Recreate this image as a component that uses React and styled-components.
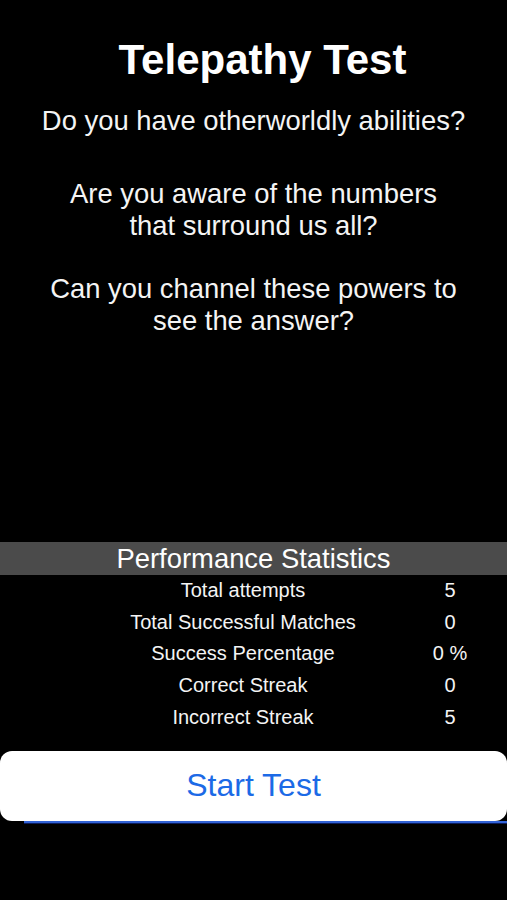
import React from "react";
import styled, { createGlobalStyle } from "styled-components";

const Global = createGlobalStyle`
  html, body { margin: 0; padding: 0; background: #000; }
  body { font-family: "Liberation Sans", Arial, Helvetica, sans-serif; color: #fff; }
`;

const Screen = styled.div`
  width: 507px;
  min-height: 900px;
  background: #000;
  display: flex;
  flex-direction: column;
  padding-top: 36px;
  box-sizing: border-box;
`;

const Title = styled.h1`
  margin: 0;
  padding-left: 18px;
  font-size: 42px;
  line-height: 48px;
  font-weight: 700;
  text-align: center;
  color: #fff;
`;

const Para = styled.p`
  margin: ${(p) => p.$top}px 0 0;
  font-size: 27.4px;
  line-height: 32px;
  text-align: center;
  color: #f4f4f4;
`;

const StatsHeader = styled.div`
  margin-top: 205px;
  height: 33px;
  background: #4b4b4b;
  color: #fff;
  font-size: 27.4px;
  line-height: 33px;
  text-align: center;
`;

const StatsList = styled.div`
  display: flex;
  flex-direction: column;
`;

const StatRow = styled.div`
  display: grid;
  grid-template-columns: 1fr 58px;
  padding: 0 28px 0 65px;
  height: 31.6px;
  align-items: center;
  font-size: 20px;
  color: #f4f4f4;
`;

const StatLabel = styled.span`
  text-align: center;
`;

const StatValue = styled.span`
  text-align: center;
`;

const StartButton = styled.button`
  margin-top: 18px;
  height: 70px;
  width: 507px;
  border: none;
  border-radius: 12px;
  background: #fff;
  color: #1c6ae6;
  font-family: "Liberation Sans", Arial, Helvetica, sans-serif;
  font-size: 32px;
  padding: 0;
  cursor: pointer;
`;

const Underline = styled.div`
  margin-left: 24px;
  height: 2px;
  background: #3263d6;
  border-bottom: 1px solid #0b1c5c;
`;

const stats = [
  ["Total attempts", "5"],
  ["Total Successful Matches", "0"],
  ["Success Percentage", "0 %"],
  ["Correct Streak", "0"],
  ["Incorrect Streak", "5"],
];

export default function App() {
  return (
    <>
      <Global />
      <Screen>
        <Title>Telepathy Test</Title>
        <Para $top={21}>Do you have otherworldly abilities?</Para>
        <Para $top={41}>
          Are you aware of the numbers
          <br />
          that surround us all?
        </Para>
        <Para $top={31}>
          Can you channel these powers to
          <br />
          see the answer?
        </Para>
        <StatsHeader>Performance Statistics</StatsHeader>
        <StatsList>
          {stats.map(([label, value]) => (
            <StatRow key={label}>
              <StatLabel>{label}</StatLabel>
              <StatValue>{value}</StatValue>
            </StatRow>
          ))}
        </StatsList>
        <StartButton>Start Test</StartButton>
        <Underline />
      </Screen>
    </>
  );
}
